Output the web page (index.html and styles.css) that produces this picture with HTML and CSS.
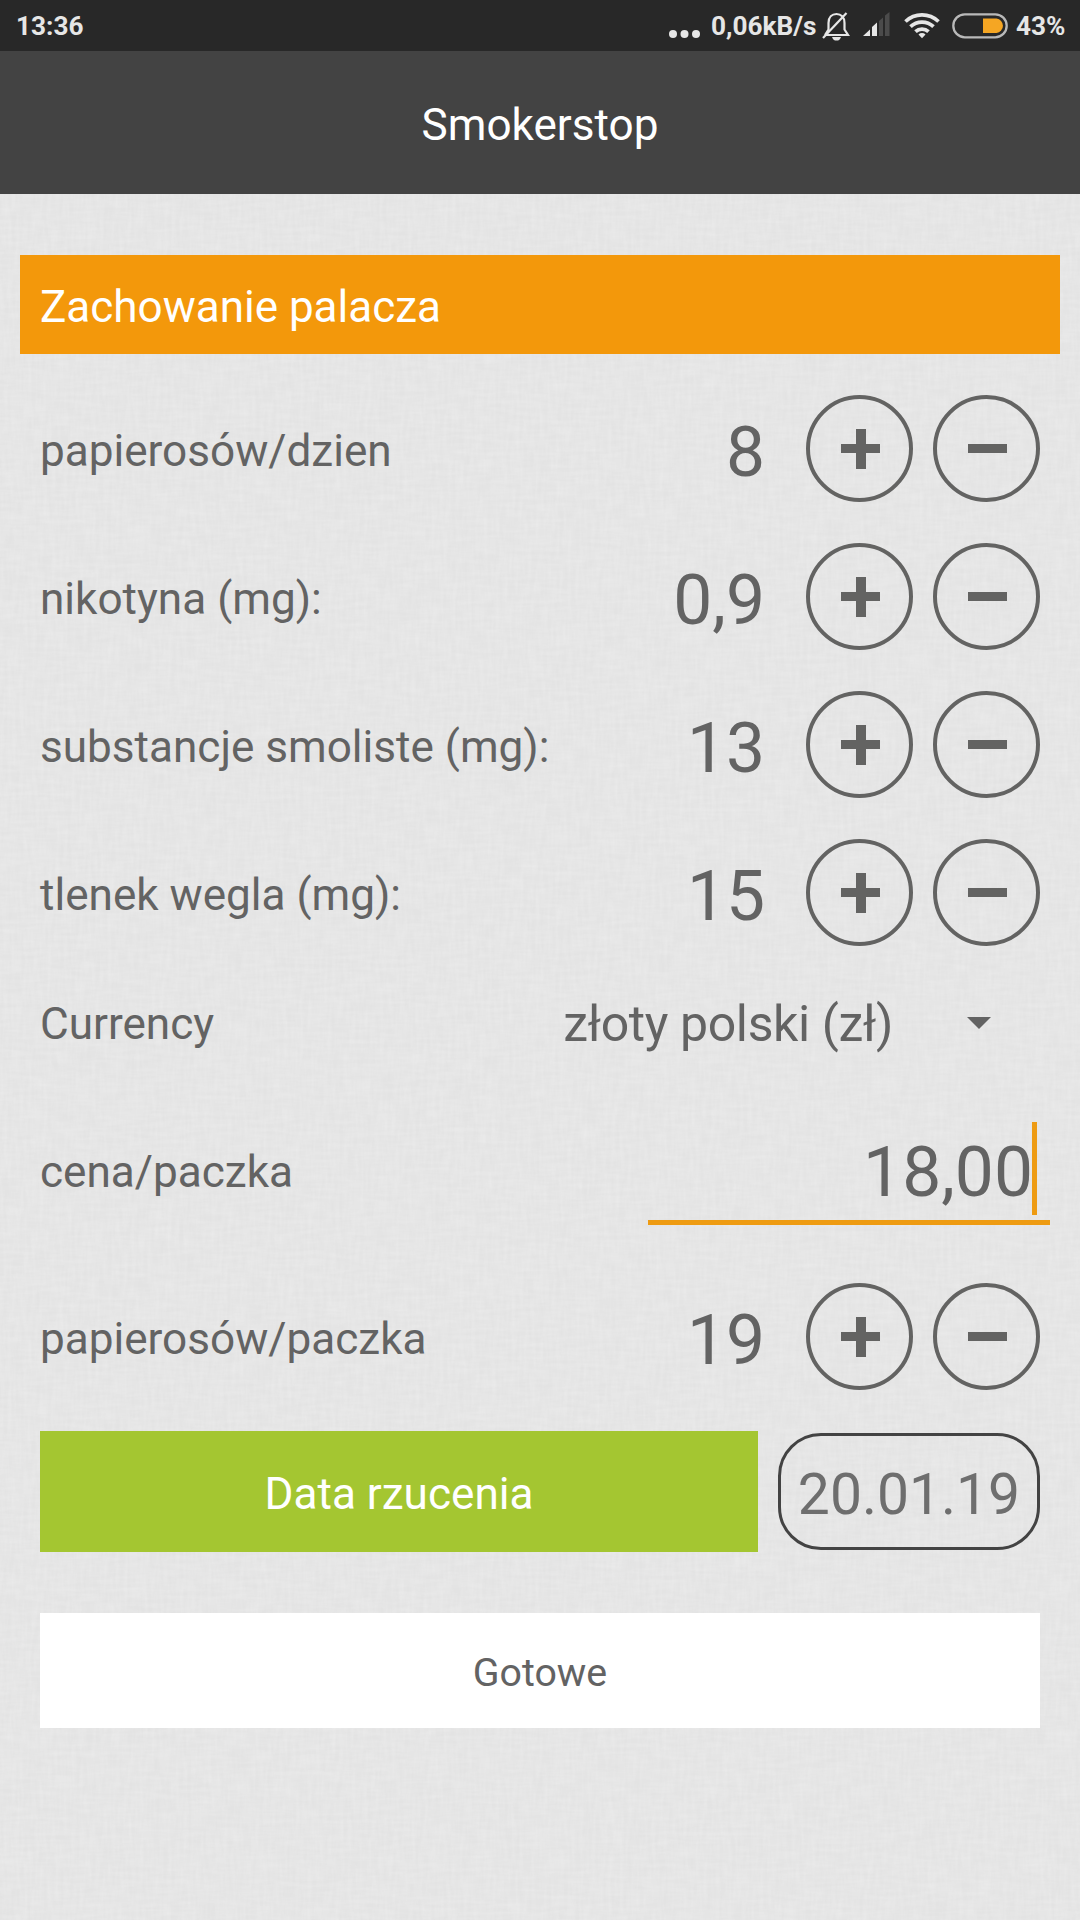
FILE: index.html
```html
<!DOCTYPE html>
<html lang="pl">

<head>
    <meta charset="UTF-8">
    <meta name="viewport" content="width=device-width, initial-scale=1.0">
    <title>Smokerstop</title>
    <link rel="stylesheet" href="styles.css">
</head>

<body>
    <svg class="linen" width="1080" height="1920">
        <filter id="weft" x="0" y="0" width="100%" height="100%" color-interpolation-filters="sRGB">
            <feTurbulence type="fractalNoise" baseFrequency="0.04 0.25" numOctaves="2" seed="4" />
            <feColorMatrix values="0 0 0 0 1  0 0 0 0 1  0 0 0 0 1  0.26 0 0 0 -0.08" />
        </filter>
        <filter id="warp" x="0" y="0" width="100%" height="100%" color-interpolation-filters="sRGB">
            <feTurbulence type="fractalNoise" baseFrequency="0.25 0.04" numOctaves="2" seed="9" />
            <feColorMatrix values="0 0 0 0 1  0 0 0 0 1  0 0 0 0 1  0.26 0 0 0 -0.08" />
        </filter>
        <rect width="1080" height="1920" filter="url(#weft)" />
        <rect width="1080" height="1920" filter="url(#warp)" />
    </svg>

    <div class="status">
        <span class="clock">13:36</span>
        <svg class="dots" width="32" height="8" viewBox="0 0 32 8" fill="#e6e6e6">
            <circle cx="4" cy="4" r="4" />
            <circle cx="15.5" cy="4" r="4" />
            <circle cx="27" cy="4" r="4" />
        </svg>
        <span class="speed">0,06kB/s</span>
        <svg class="bell" width="28" height="30" viewBox="0 0 28 30" fill="none" stroke="#e6e6e6" stroke-width="2.2">
            <path d="M3 24H26L22.5 18.500V12C22.500 6 19 3 14.500 3S6.500 6 6.500 12V18.500L3 24" />
            <path d="M1 27L24.500 2" />
            <path d="M10 26H19C18 29 16.500 29.500 14.500 29.500S11 29 10 26Z" fill="#e6e6e6" stroke="none" />
        </svg>
        <svg class="signal" width="28" height="25" viewBox="0 0 28 25">
            <path d="M0 24L7 17.500V24Z" fill="#e6e6e6" />
            <path d="M9 24V15L14 10.500V24Z" fill="#e6e6e6" />
            <path d="M16 24V9L20 5.500V24Z" fill="#4b4b4b" />
            <path d="M22 24V3.500L26.500 0V24Z" fill="#4b4b4b" />
        </svg>
        <svg class="wifi" width="36" height="27" viewBox="0 0 36 27" fill="none" stroke="#e6e6e6" stroke-width="3.700">
            <path d="M1.500 9.500A24 24 0 0 1 34.500 9.500" />
            <path d="M6.500 14.700A16.500 16.500 0 0 1 29.500 14.700" />
            <path d="M11.500 19.700A9.500 9.500 0 0 1 24.500 19.700" />
            <path d="M14.500 22.500A5 5 0 0 1 21.500 22.500L18 26.300Z" fill="#e6e6e6" stroke="none" />
        </svg>
        <svg class="battery" width="56" height="26" viewBox="0 0 56 26">
            <rect x="1.300" y="1.300" width="53.400" height="23" rx="11.500" fill="none" stroke="#b9b9b9" stroke-width="2.300" />
            <path d="M31 5.500H44.500A7.300 7.300 0 0 1 44.500 20H31Z" fill="#f5a623" />
        </svg>
        <span class="percent">43%</span>
    </div>

    <div class="header">Smokerstop</div>

    <div class="content">
        <h2 class="title">Zachowanie palacza</h2>

        <div class="row">
            <span class="label">papierosów/dzien</span>
            <span class="value">8</span>
            <button class="round plus"></button>
            <button class="round"></button>
        </div>
        <div class="row">
            <span class="label">nikotyna (mg):</span>
            <span class="value">0,9</span>
            <button class="round plus"></button>
            <button class="round"></button>
        </div>
        <div class="row">
            <span class="label">substancje smoliste (mg):</span>
            <span class="value">13</span>
            <button class="round plus"></button>
            <button class="round"></button>
        </div>
        <div class="row">
            <span class="label">tlenek wegla (mg):</span>
            <span class="value">15</span>
            <button class="round plus"></button>
            <button class="round"></button>
        </div>
        <div class="row currency">
            <span class="label">Currency</span>
            <span class="select">złoty polski (zł)</span>
            <span class="arrow"></span>
        </div>
        <div class="row price">
            <span class="label">cena/paczka</span>
            <div class="field"><span>18,00</span><i class="caret"></i></div>
        </div>
        <div class="row">
            <span class="label">papierosów/paczka</span>
            <span class="value">19</span>
            <button class="round plus"></button>
            <button class="round"></button>
        </div>

        <div class="quit">
            <button class="quitBtn">Data rzucenia</button>
            <span class="date">20.01.19</span>
        </div>
        <button class="done">Gotowe</button>
    </div>
</body>

</html>
```
FILE: styles.css
```css
* {
    box-sizing: border-box;
}

body {
    margin: 0;
    height: 1920px;
    overflow: hidden;
    background: #e3e3e3;
    color: #636363;
    font-family: Roboto, "Noto Sans", sans-serif;
    font-size: 44.1px;
}

button {
    margin: 0;
    padding: 0;
    border: 0;
    color: inherit;
    font: inherit;
}

/* background texture */
.linen {
    position: absolute;
    left: 0;
    top: 0;
    z-index: -1;
}

.status {
    display: flex;
    height: 51px;
    padding: 0 15px 0 16px;
    background: #282828;
    color: #e6e6e6;
    font-size: 26.2px;
    font-weight: 700;
    line-height: 53px;
}

.status svg {
    flex: none;
}

.clock {
    flex: 1;
}

.dots {
    margin: 30px 10px 0 0;
}

.speed {
    width: 104px;
    white-space: nowrap;
}

.bell {
    margin: 11px 0 0 7px;
}

.signal {
    margin: 12px 0 0 13px;
}

.wifi {
    margin: 12px 0 0 13px;
}

.battery {
    margin: 13px 0 0 12px;
}

.percent {
    width: 49px;
    margin-left: 8px;
}

.header {
    height: 143px;
    background: #434343;
    color: #ffffff;
    line-height: 149px;
    text-align: center;
}

.content {
    padding: 61px 20px 0;
}

.title {
    height: 99px;
    margin: 0 0 21px;
    padding-left: 20px;
    background: #f3980b;
    color: #ffffff;
    font-size: 44px;
    font-weight: 400;
    line-height: 105px;
}

.row {
    display: flex;
    height: 148px;
    padding: 20px 20px 0;
}

.label {
    flex: 1;
    line-height: 113px;
    white-space: nowrap;
}

.value {
    margin-right: 41px;
    font-size: 69.5px;
    line-height: 115px;
}

.round {
    flex: none;
    width: 107px;
    height: 107px;
    border: 4px solid #636362;
    border-radius: 50%;
    background: linear-gradient(#636362, #636362) 31px 44.5px / 39px 9px no-repeat;
}

.round.plus {
    margin-right: 20px;
    background: linear-gradient(#636362, #636362) 31px 44.5px / 39px 9px no-repeat, linear-gradient(#636362, #636362) 45.5px 29.500px / 10px 40px no-repeat;
}

.currency {
    height: 112px;
    padding: 2px 20px 0;
    align-items: center;
}

.select {
    margin-right: 74px;
    font-size: 50px;
    letter-spacing: -0.4px;
}

.arrow {
    margin: 0 49px 2px 0;
    border: 12px solid transparent;
    border-top-color: #636363;
    border-bottom: 0;
}

.price {
    height: 184px;
    padding: 43px 10px 0 20px;
}

.price .label {
    line-height: 101px;
}

.field {
    display: flex;
    justify-content: flex-end;
    width: 402px;
    height: 103px;
    padding-right: 13px;
    border-bottom: 5px solid #ee9b12;
    font-size: 69.5px;
    line-height: 101px;
}

.caret {
    width: 5px;
    height: 93px;
    margin-left: -1px;
    background: #ee9b12;
}

.quit {
    display: flex;
    align-items: center;
    justify-content: space-between;
    padding: 20px 20px 0;
}

.quitBtn {
    width: 718px;
    height: 121px;
    background: #a4c631;
    color: #ffffff;
    line-height: 127px;
}

.date {
    width: 262px;
    height: 117px;
    border: 3px solid #434343;
    border-radius: 43px;
    color: #6e6e6e;
    font-size: 57px;
    line-height: 117px;
    text-align: center;
}

.done {
    display: block;
    width: 1000px;
    height: 115px;
    margin: 61px 20px 0;
    background: #ffffff;
    font-size: 39.3px;
    line-height: 121px;
}
```
